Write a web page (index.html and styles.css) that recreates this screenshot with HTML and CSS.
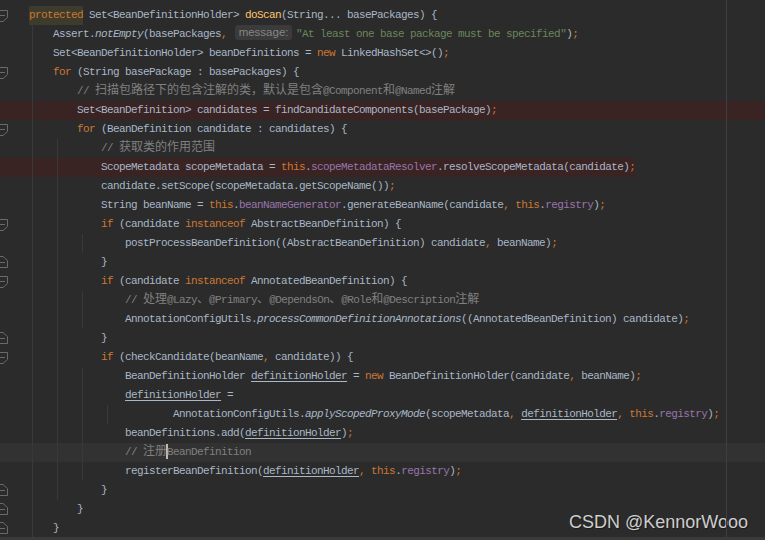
FILE: index.html
```html
<!DOCTYPE html>
<html lang="en">
<head>
    <meta charset="UTF-8">
    <title>ClassPathBeanDefinitionScanner.doScan</title>
    <link rel="stylesheet" href="styles.css">
</head>
<body>
    <div class="editor">
        <div class="line"><span class="gutter"><svg class="fold" viewBox="0 0 10 13"><path d="M-3 1.5H7.5V8.5L3 12.5H-3Z M0 6.5H5"/></svg></span><span class="code"><span class="kw sel">protected</span> Set&lt;BeanDefinitionHolder&gt; <span class="decl">doScan</span>(String... basePackages) {</span></div>
        <div class="line g1"><span class="gutter"></span><span class="code">    Assert.<span class="ital">notEmpty</span>(basePackages<span class="kw">,</span> <span class="hint">message:</span><span class="str">"At least one base package must be specified"</span>)<span class="kw">;</span></span></div>
        <div class="line g1"><span class="gutter"></span><span class="code">    Set&lt;BeanDefinitionHolder&gt; beanDefinitions = <span class="kw">new</span> LinkedHashSet&lt;&gt;()<span class="kw">;</span></span></div>
        <div class="line g1"><span class="gutter"><svg class="fold" viewBox="0 0 10 13"><path d="M-3 1.5H7.5V8.5L3 12.5H-3Z M0 6.5H5"/></svg></span><span class="code">    <span class="kw">for</span> (String basePackage : basePackages) {</span></div>
        <div class="line g2"><span class="gutter"></span><span class="code">        <span class="cmt">// <span class="cn">扫描包路径下的包含注解的类，默认是包含</span>@Component<span class="cn">和</span>@Named<span class="cn">注解</span></span></span></div>
        <div class="line g2 brk"><span class="gutter"></span><span class="code">        Set&lt;BeanDefinition&gt; candidates = findCandidateComponents(basePackage)<span class="kw">;</span></span></div>
        <div class="line g2"><span class="gutter"><svg class="fold" viewBox="0 0 10 13"><path d="M-3 1.5H7.5V8.5L3 12.5H-3Z M0 6.5H5"/></svg></span><span class="code">        <span class="kw">for</span> (BeanDefinition candidate : candidates) {</span></div>
        <div class="line g3"><span class="gutter"></span><span class="code">            <span class="cmt">// <span class="cn">获取类的作用范围</span></span></span></div>
        <div class="line g3 brk fit"><span class="gutter"></span><span class="code">            ScopeMetadata scopeMetadata = <span class="kw">this</span>.<span class="fld">scopeMetadataResolver</span>.resolveScopeMetadata(candidate)<span class="kw">;</span></span></div>
        <div class="line g3"><span class="gutter"></span><span class="code">            candidate.setScope(scopeMetadata.getScopeName())<span class="kw">;</span></span></div>
        <div class="line g3"><span class="gutter"></span><span class="code">            String beanName = <span class="kw">this</span>.<span class="fld">beanNameGenerator</span>.generateBeanName(candidate<span class="kw">,</span> <span class="kw">this</span>.<span class="fld">registry</span>)<span class="kw">;</span></span></div>
        <div class="line g3"><span class="gutter"><svg class="fold" viewBox="0 0 10 13"><path d="M-3 1.5H7.5V8.5L3 12.5H-3Z M0 6.5H5"/></svg></span><span class="code">            <span class="kw">if</span> (candidate <span class="kw">instanceof</span> AbstractBeanDefinition) {</span></div>
        <div class="line g4"><span class="gutter"></span><span class="code">                postProcessBeanDefinition((AbstractBeanDefinition) candidate<span class="kw">,</span> beanName)<span class="kw">;</span></span></div>
        <div class="line g3"><span class="gutter"><svg class="fold" viewBox="0 0 10 13"><path d="M-3 11.5H7.5V4.5L3 0.5H-3Z M0 6.5H5"/></svg></span><span class="code">            }</span></div>
        <div class="line g3"><span class="gutter"><svg class="fold" viewBox="0 0 10 13"><path d="M-3 1.5H7.5V8.5L3 12.5H-3Z M0 6.5H5"/></svg></span><span class="code">            <span class="kw">if</span> (candidate <span class="kw">instanceof</span> AnnotatedBeanDefinition) {</span></div>
        <div class="line g4"><span class="gutter"></span><span class="code">                <span class="cmt">// <span class="cn">处理</span>@Lazy<span class="cn">、</span>@Primary<span class="cn">、</span>@DependsOn<span class="cn">、</span>@Role<span class="cn">和</span>@Description<span class="cn">注解</span></span></span></div>
        <div class="line g4"><span class="gutter"></span><span class="code">                AnnotationConfigUtils.<span class="ital">processCommonDefinitionAnnotations</span>((AnnotatedBeanDefinition) candidate)<span class="kw">;</span></span></div>
        <div class="line g3"><span class="gutter"><svg class="fold" viewBox="0 0 10 13"><path d="M-3 11.5H7.5V4.5L3 0.5H-3Z M0 6.5H5"/></svg></span><span class="code">            }</span></div>
        <div class="line g3"><span class="gutter"><svg class="fold" viewBox="0 0 10 13"><path d="M-3 1.5H7.5V8.5L3 12.5H-3Z M0 6.5H5"/></svg></span><span class="code">            <span class="kw">if</span> (checkCandidate(beanName<span class="kw">,</span> candidate)) {</span></div>
        <div class="line g4"><span class="gutter"></span><span class="code">                BeanDefinitionHolder <span class="var">definitionHolder</span> = <span class="kw">new</span> BeanDefinitionHolder(candidate<span class="kw">,</span> beanName)<span class="kw">;</span></span></div>
        <div class="line g4"><span class="gutter"></span><span class="code">                <span class="var">definitionHolder</span> =</span></div>
        <div class="line g5"><span class="gutter"></span><span class="code">                        AnnotationConfigUtils.<span class="ital">applyScopedProxyMode</span>(scopeMetadata<span class="kw">,</span> <span class="var">definitionHolder</span><span class="kw">,</span> <span class="kw">this</span>.<span class="fld">registry</span>)<span class="kw">;</span></span></div>
        <div class="line g4"><span class="gutter"></span><span class="code">                beanDefinitions.add(<span class="var">definitionHolder</span>)<span class="kw">;</span></span></div>
        <div class="line g4 current"><span class="gutter"></span><span class="code">                <span class="cmt">// <span class="cn">注册</span><span class="caret"></span>BeanDefinition</span></span></div>
        <div class="line g4"><span class="gutter"></span><span class="code">                registerBeanDefinition(<span class="var">definitionHolder</span><span class="kw">,</span> <span class="kw">this</span>.<span class="fld">registry</span>)<span class="kw">;</span></span></div>
        <div class="line g3"><span class="gutter"><svg class="fold" viewBox="0 0 10 13"><path d="M-3 11.5H7.5V4.5L3 0.5H-3Z M0 6.5H5"/></svg></span><span class="code">            }</span></div>
        <div class="line g2"><span class="gutter"><svg class="fold" viewBox="0 0 10 13"><path d="M-3 11.5H7.5V4.5L3 0.5H-3Z M0 6.5H5"/></svg></span><span class="code">        }</span></div>
        <div class="line g1"><span class="gutter"><svg class="fold" viewBox="0 0 10 13"><path d="M-3 11.5H7.5V4.5L3 0.5H-3Z M0 6.5H5"/></svg></span><span class="code">    }</span></div>
        <div class="watermark">CSDN @KennorWooo</div>
    </div>
    <div class="hscroll"></div>
</body>
</html>
```

FILE: styles.css
```css
* {
    margin: 0;
    padding: 0;
    box-sizing: border-box;
}

body {
    width: 765px;
    height: 540px;
    overflow: hidden;
    background: #2b2b2b;
}

.editor {
    position: relative;
    height: 537px;
    overflow: hidden;
    padding-top: 6px;
    font-family: 'Liberation Mono', monospace;
    font-size: 11px;
    letter-spacing: -0.6px;
    color: #a9b7c6;
}

/* right margin guide */
.editor::after {
    content: '';
    position: absolute;
    top: 0;
    bottom: 0;
    left: 726px;
    width: 1px;
    background: #3f3f3f;
}

.line {
    display: flex;
    height: 19px;
    line-height: 19px;
    background-image: repeating-linear-gradient(to right, transparent 0 24px, #393939 24px 25px);
    background-position: 8px 0;
    background-repeat: no-repeat;
    background-size: 0 0;
}

/* indent guides */
.g1 { background-size: 25px 100%; }
.g2 { background-size: 49px 100%; }
.g3 { background-size: 73px 100%; }
.g4 { background-size: 97px 100%; }
.g5 { background-size: 121px 100%; }

.brk {
    background-color: #3a2323;
}

.fit {
    width: fit-content;
}

.current {
    background-color: #323232;
}

.gutter {
    width: 29px;
    flex-shrink: 0;
    display: flex;
    align-items: center;
}

.fold {
    width: 10px;
    height: 13px;
    fill: none;
    stroke: #6a6a6a;
    stroke-width: 1;
}

.code {
    white-space: pre;
}

.kw { color: #cc7832; }
.str { color: #6a8759; }
.cmt { color: #808080; }
.fld { color: #9876aa; }
.decl { color: #ffc66d; }
.ital { font-style: italic; }

.var {
    text-decoration: underline;
    text-underline-offset: 2px;
}

.sel {
    display: inline-block;
    background: #3d3b2b;
}

.cn {
    font-family: 'Noto Sans CJK SC', sans-serif;
    font-size: 12px;
    letter-spacing: 0;
    line-height: 1;
}

.hint {
    display: inline-block;
    width: 57px;
    height: 15px;
    margin: 0 4px 0 2px;
    line-height: 15px;
    vertical-align: top;
    border-radius: 3px;
    background: #3b3b3b;
    color: #858585;
    font-family: 'Liberation Sans', sans-serif;
    font-size: 11.5px;
    letter-spacing: 0;
    text-align: center;
}

.caret {
    display: inline-block;
    width: 2px;
    height: 15px;
    margin: 0 -1px;
    vertical-align: -4px;
    background: #bbbbbb;
}

.watermark {
    position: absolute;
    top: 513px;
    right: 17px;
    font-family: 'Liberation Sans', Arial, sans-serif;
    font-size: 18px;
    line-height: 18px;
    letter-spacing: 0;
    color: rgba(255, 255, 255, 0.78);
    text-shadow: 1px 1px 1px rgba(0, 0, 0, 0.4);
}

.hscroll {
    height: 3px;
    background: #3a3a3a;
}
```
